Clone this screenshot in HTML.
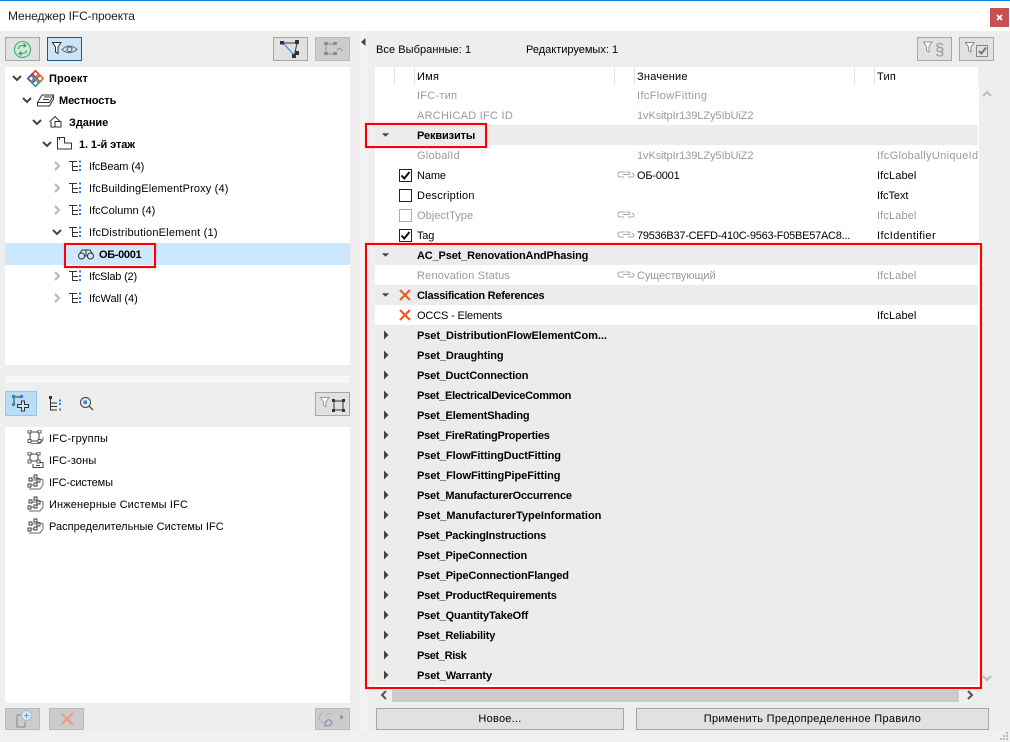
<!DOCTYPE html>
<html lang="ru">
<head>
<meta charset="utf-8">
<title>Менеджер IFC-проекта</title>
<style>
html,body{margin:0;padding:0}
body{width:1010px;height:742px;position:relative;overflow:hidden;background:#f0f0f0;font-family:"Liberation Sans","Noto Sans CJK SC",sans-serif;font-size:11px;color:#000}
div,span,svg{position:absolute;display:block}
svg{overflow:visible}
.t{white-space:nowrap;line-height:20px;height:20px;letter-spacing:.25px;margin-top:1px}
.b{font-weight:bold;letter-spacing:-.15px}
.g{color:#9a9a9a}
.row{left:375px;width:603px;height:20px;background:#fff}
.grp{background:#ececec}
.btn{box-sizing:border-box;border:1px solid #a6a6a6;background:#e1e1e1}
.dis{background:#ccc;border-color:#bababa}
.red{box-sizing:border-box;border:2px solid #f00;box-shadow:0 0 1px #f88}
.sep{top:67px;width:1px;height:18px;background:#e3e3e3}
</style>
</head>
<body>
<svg width="0" height="0" style="left:0;top:0">
<defs>
<symbol id="type" viewBox="0 0 14 14"><path d="M1 2.500H9M4.500 2.500V11.500H10M4.500 7.500H10" fill="none" stroke="#333" stroke-width="1"/><path d="M11 1.500H13V3.500H11ZM11 6H13V8H11ZM11 10H13V12H11Z" fill="#2f80ed"/></symbol>
<symbol id="open" viewBox="0 0 10 10"><path d="M1 3L5 7L9 3" fill="none" stroke="#444" stroke-width="2"/></symbol>
<symbol id="closed" viewBox="0 0 10 10"><path d="M3 1L7 5L3 9" fill="none" stroke="#b4b4b4" stroke-width="2"/></symbol>
<symbol id="down" viewBox="0 0 10 6"><path d="M1 1H9L5 5Z" fill="#444"/></symbol>
<symbol id="right" viewBox="0 0 6 10"><path d="M1 .5L5.500 5L1 9.500Z" fill="#444"/></symbol>
<symbol id="link" viewBox="0 0 18 10"><path d="M8 2H3Q1 2 1 4.500Q1 7 3 7H7M6 4.500H12Q13 4.500 13 3Q13 2 12 2H9M11 7H15Q17 7 17 5Q17 3.500 15 3.500" fill="none" stroke="#aaa" stroke-width="1"/></symbol>
<symbol id="cross" viewBox="0 0 12 12"><path d="M1 1L11 11M11 1L1 11" stroke="#ef5a24" stroke-width="2.200" fill="none"/></symbol>
<symbol id="chk" viewBox="0 0 13 13"><rect x=".5" y=".5" width="12" height="12" fill="#fff" stroke="#222"/><path d="M2.500 6.500L5.300 9.500L10.500 3" fill="none" stroke="#111" stroke-width="2"/></symbol>
<symbol id="grp" viewBox="0 0 18 16"><path d="M3 2H12V11H3Z" fill="none" stroke="#444"/><path d="M4 13.500H13L16 10V7M13 13.500V10H16" fill="none" stroke="#777"/><path d="M1 0H4V3H1ZM11 0H14V3H11ZM1 9.500H4V12.500H1ZM11 9.500H14V12.500H11Z" fill="#fff" stroke="#333" stroke-width=".8"/></symbol>
<symbol id="zone" viewBox="0 0 18 16"><path d="M3 2H11V9H3ZM6 12V15.500H16V10.500H13V8" fill="none" stroke="#444"/><path d="M9 13.500H13" stroke="#444"/><path d="M1 0H4V3H1ZM10 0H13V3H10ZM1 8H4V11H1ZM10 8H13V11H10Z" fill="#fff" stroke="#333" stroke-width=".8"/></symbol>
<symbol id="sys" viewBox="0 0 18 16"><path d="M7 1H10V4H7ZM2 4H5V7H2ZM10 5H13V8H10ZM1 10H4V13H1ZM7 9H10V12H7Z" fill="#fff" stroke="#333" stroke-width=".9"/><path d="M5 6L10 6M4 11H7M2 15H13L16 11V6L11 4" fill="none" stroke="#666"/></symbol>
</defs>
</svg>

<!-- frame -->
<div style="left:0;top:0;width:1010px;height:31px;background:#fff"></div>
<div style="left:0;top:0;width:1010px;height:1px;background:#0a84d8"></div>
<div class="t" style="left:8px;top:6px;margin-top:0;font-size:12px;letter-spacing:-.1px;color:#222">Менеджер IFC-проекта</div>
<div style="left:990px;top:8px;width:19px;height:19px;background:#c75050"></div>
<svg style="left:996px;top:14px" width="7" height="7" viewBox="0 0 7 7"><path d="M1 1L6 6M6 1L1 6" stroke="#fff" stroke-width="1.800"/></svg>

<div style="left:0;top:31px;width:1010px;height:700px;background:#eee"></div>
<div style="left:360px;top:31px;width:7px;height:700px;background:#f3f3f3"></div>
<svg style="left:361px;top:38px" width="5" height="8" viewBox="0 0 5 8"><path d="M4.500 0V8L0 4Z" fill="#444"/></svg>

<!-- left toolbar -->
<div class="btn" style="left:5px;top:37px;width:35px;height:24px"></div>
<svg style="left:14px;top:41px" width="17" height="17" viewBox="0 0 17 17"><circle cx="8.500" cy="8.500" r="8" fill="none" stroke="#2db567" stroke-width="1.100"/><path d="M4.500 8Q4.800 4.500 8.500 4.500H11M9.500 2.500L12 4.500L9.500 6.500M12.500 9Q12.200 12.500 8.500 12.500H6M7.500 10.500L5 12.500L7.500 14.500" fill="none" stroke="#2db567" stroke-width="1.200"/></svg>
<div class="btn" style="left:47px;top:37px;width:35px;height:24px;background:#cce4f7;border-color:#0d5a9a"></div>
<svg style="left:52px;top:42px" width="26" height="14" viewBox="0 0 26 14"><path d="M.5 .5H9L6 5V11.500L3.500 10V5Z" fill="#fff" stroke="#333"/><path d="M10 7.500Q17 .5 25 7.500Q17 14 10 7.500Z" fill="none" stroke="#666"/><circle cx="17.500" cy="7.300" r="2.400" fill="none" stroke="#666" stroke-width="1.200"/></svg>
<div class="btn" style="left:273px;top:37px;width:35px;height:24px"></div>
<svg style="left:280px;top:40px" width="20" height="18" viewBox="0 0 20 18"><path d="M3 3H17L14.500 15" fill="none" stroke="#333"/><path d="M3 3L14 15" stroke="#2f7fe0"/><path d="M0 1H4V4.500H0ZM15 0H19V4H15ZM15 11H19V15H15ZM12 14H16V18H12Z" fill="#333"/></svg>
<div class="btn dis" style="left:315px;top:37px;width:35px;height:24px"></div>
<svg style="left:324px;top:42px" width="19" height="14" viewBox="0 0 19 14"><path d="M2 2H11M2 2V12H11" fill="none" stroke="#999"/><path d="M0 0H4V3H0ZM9 0H13V3H9ZM0 10H4V13H0ZM9 10H13V13H9Z" fill="#8d8d8d"/><path d="M13 9Q14 5 17 7L18 9" fill="none" stroke="#999"/></svg>

<!-- tree -->
<div style="left:5px;top:67px;width:345px;height:298px;background:#fff"></div>
<div style="left:5px;top:243px;width:345px;height:22px;background:#cce8ff"></div>
<svg style="left:12px;top:73px" width="10" height="10"><use href="#open"/></svg>
<svg style="left:27px;top:70px" width="17" height="17" viewBox="0 0 17 17"><path d="M8.500 .8L13 5.300L8.500 9.800L4 5.300Z" fill="none" stroke="#d8402f" stroke-width="1.700"/><path d="M5.300 4L9.800 8.500L5.300 13L.8 8.500Z" fill="none" stroke="#7b3fa8" stroke-width="1.700"/><path d="M11.700 4L16.200 8.500L11.700 13L7.200 8.500Z" fill="none" stroke="#e0703a" stroke-width="1.700"/><path d="M8.500 7.200L13 11.700L8.500 16.200L4 11.700Z" fill="none" stroke="#2aa198" stroke-width="1.700"/></svg>
<div class="t b" style="left:49px;top:68px;letter-spacing:.1px">Проект</div>
<svg style="left:22px;top:95px" width="10" height="10"><use href="#open"/></svg>
<svg style="left:37px;top:94px" width="17" height="13" viewBox="0 0 17 13"><path d="M.5 8.500L5 1H16.500L12.500 8.500H.5V12H12.500L16.500 5V1M7 3H14M6 5.500H12" fill="none" stroke="#333"/></svg>
<div class="t b" style="left:59px;top:90px;letter-spacing:-.1px">Местность</div>
<svg style="left:32px;top:117px" width="10" height="10"><use href="#open"/></svg>
<svg style="left:49px;top:116px" width="13" height="12" viewBox="0 0 13 12"><path d="M.5 6L6 .5L11 5.500M2 6V11H12V5.500H6V11" fill="none" stroke="#333"/></svg>
<div class="t b" style="left:69px;top:112px;letter-spacing:-.05px">Здание</div>
<svg style="left:42px;top:139px" width="10" height="10"><use href="#open"/></svg>
<svg style="left:57px;top:137px" width="15" height="13" viewBox="0 0 15 13"><path d="M.5 .5H7.500V6H14.500V12H.5Z M2.500 .5V3" fill="none" stroke="#333"/></svg>
<div class="t b" style="left:79px;top:134px;letter-spacing:-.1px">1. 1-й этаж</div>

<svg style="left:52px;top:161px" width="10" height="10"><use href="#closed"/></svg>
<svg style="left:68px;top:159px" width="14" height="14"><use href="#type"/></svg>
<div class="t" style="left:89px;top:156px;letter-spacing:-.15px">IfcBeam (4)</div>
<svg style="left:52px;top:183px" width="10" height="10"><use href="#closed"/></svg>
<svg style="left:68px;top:181px" width="14" height="14"><use href="#type"/></svg>
<div class="t" style="left:89px;top:178px;letter-spacing:.14px">IfcBuildingElementProxy (4)</div>
<svg style="left:52px;top:205px" width="10" height="10"><use href="#closed"/></svg>
<svg style="left:68px;top:203px" width="14" height="14"><use href="#type"/></svg>
<div class="t" style="left:89px;top:200px;letter-spacing:.02px">IfcColumn (4)</div>
<svg style="left:52px;top:227px" width="10" height="10"><use href="#open"/></svg>
<svg style="left:68px;top:225px" width="14" height="14"><use href="#type"/></svg>
<div class="t" style="left:89px;top:222px;letter-spacing:.2px">IfcDistributionElement (1)</div>
<svg style="left:78px;top:248px" width="16" height="12" viewBox="0 0 16 12"><circle cx="3.500" cy="8" r="3" fill="none" stroke="#333"/><circle cx="12.500" cy="8" r="3" fill="none" stroke="#333"/><path d="M4 2H12L14.500 6M1.500 6L4 2M6.500 8H9.500M8 2V8" fill="none" stroke="#333"/></svg>
<div class="t b" style="left:99px;top:244px;letter-spacing:-.33px">ОБ-0001</div>
<svg style="left:52px;top:271px" width="10" height="10"><use href="#closed"/></svg>
<svg style="left:68px;top:269px" width="14" height="14"><use href="#type"/></svg>
<div class="t" style="left:89px;top:266px;letter-spacing:-.2px">IfcSlab (2)</div>
<svg style="left:52px;top:293px" width="10" height="10"><use href="#closed"/></svg>
<svg style="left:68px;top:291px" width="14" height="14"><use href="#type"/></svg>
<div class="t" style="left:89px;top:288px;letter-spacing:-.03px">IfcWall (4)</div>
<div class="red" style="left:64px;top:243px;width:92px;height:25px"></div>

<div style="left:5px;top:376px;width:345px;height:7px;background:#f7f7f7"></div>

<!-- lower toolbar -->
<div style="left:5px;top:391px;width:32px;height:25px;box-sizing:border-box;background:#bbdcf5;border:1px solid #90c8f0"></div>
<svg style="left:12px;top:395px" width="18" height="17" viewBox="0 0 18 17"><path d="M2 2H10M2 2V10" stroke="#333" fill="none"/><path d="M0 0H3V3H0ZM8 0H11V3H8ZM0 8H3V11H0Z" fill="#2f7fe0"/><path d="M9.500 6H12.500V9.500H16.500V12.500H12.500V16H9.500V12.500H5.500V9.500H9.500Z" fill="#cfe6f8" stroke="#333"/></svg>
<svg style="left:48px;top:396px" width="14" height="15" viewBox="0 0 14 15"><path d="M1 0H4V3H1Z" fill="#333"/><path d="M2.500 3V14H9M2.500 7H9M2.500 10.500H9" stroke="#333" fill="none"/><path d="M11 3.500H13V5.500H11ZM11 7H13V9H11ZM11 12.500H13V14.500H11Z" fill="#2f80ed"/></svg>
<svg style="left:79px;top:396px" width="15" height="15" viewBox="0 0 15 15"><circle cx="6.500" cy="6.500" r="5" fill="none" stroke="#555" stroke-width="1.200"/><rect x="4.500" y="4.500" width="3.500" height="3.500" fill="#2f80ed"/><path d="M10 10L14 14" stroke="#555" stroke-width="1.400"/></svg>
<div class="btn" style="left:315px;top:392px;width:35px;height:24px"></div>
<svg style="left:320px;top:397px" width="26" height="15" viewBox="0 0 26 15"><path d="M.5 .5H9L6 5V10L3.500 8.500V5Z" fill="#fff" stroke="#999"/><path d="M14 4H23V13H14Z" fill="none" stroke="#333"/><path d="M12 2H15V5H12ZM22 2H25V5H22ZM12 12H15V15H12ZM22 12H25V15H22Z" fill="#333"/></svg>

<!-- lower list -->
<div style="left:5px;top:427px;width:345px;height:276px;background:#fff"></div>
<svg style="left:27px;top:430px" width="18" height="16"><use href="#grp"/></svg>
<div class="t" style="left:49px;top:428px">IFC-группы</div>
<svg style="left:27px;top:452px" width="18" height="16"><use href="#zone"/></svg>
<div class="t" style="left:49px;top:450px;letter-spacing:.12px">IFC-зоны</div>
<svg style="left:27px;top:474px" width="18" height="16"><use href="#sys"/></svg>
<div class="t" style="left:49px;top:472px;letter-spacing:-.1px">IFC-системы</div>
<svg style="left:27px;top:496px" width="18" height="16"><use href="#sys"/></svg>
<div class="t" style="left:49px;top:494px;letter-spacing:.15px">Инженерные Системы IFC</div>
<svg style="left:27px;top:518px" width="18" height="16"><use href="#sys"/></svg>
<div class="t" style="left:49px;top:516px;letter-spacing:.02px">Распределительные Системы IFC</div>

<!-- lower buttons -->
<div class="btn dis" style="left:5px;top:708px;width:35px;height:22px"></div>
<svg style="left:16px;top:710px" width="16" height="18" viewBox="0 0 16 18"><path d="M6 5H1V17H9V12" fill="none" stroke="#888"/><circle cx="10.500" cy="5.500" r="5" fill="#dbe8f8" stroke="#9dbbe8"/><path d="M10.500 3V8M8 5.500H13" stroke="#6f9be0"/></svg>
<div class="btn dis" style="left:49px;top:708px;width:35px;height:22px"></div>
<svg style="left:60px;top:712px" width="14" height="14" viewBox="0 0 14 14"><path d="M1 1L13 13M13 1L1 13" stroke="#ef9a85" stroke-width="2"/></svg>
<div class="btn dis" style="left:315px;top:708px;width:35px;height:22px"></div>
<svg style="left:317px;top:711px" width="28" height="17" viewBox="0 0 28 17"><path d="M6 2A5 5 0 1 0 10 11" fill="none" stroke="#9dbbe8" stroke-width="1.500"/><path d="M9 5Q11 1 16 3" fill="none" stroke="#bbb"/><path d="M8 12Q11 6 15 11Q15 15 8 15Z" fill="none" stroke="#888"/><path d="M25 3L25 9L28 6Z" fill="#888" transform="translate(-1.500 0)"/></svg>

<!-- right top -->
<div class="t" style="left:376px;top:39px;letter-spacing:.06px">Все Выбранные: 1</div>
<div class="t" style="left:526px;top:39px;letter-spacing:0">Редактируемых: 1</div>
<div class="btn" style="left:917px;top:37px;width:35px;height:24px"></div>
<svg style="left:923px;top:41px" width="24" height="17" viewBox="0 0 24 17"><path d="M.5 1H9L6 5.500V11L3.500 9.500V5.500Z" fill="#fff" stroke="#999"/><text x="12" y="14" font-family="Liberation Sans, sans-serif" font-size="17" fill="#999">§</text></svg>
<div class="btn" style="left:959px;top:37px;width:35px;height:24px"></div>
<svg style="left:965px;top:42px" width="24" height="15" viewBox="0 0 24 15"><path d="M.5 .5H9L6 5V10L3.500 8.500V5Z" fill="#fff" stroke="#888"/><rect x="11.500" y="3.500" width="11" height="11" fill="none" stroke="#888"/><path d="M14 9L16.500 11.500L21 5.500" stroke="#777" stroke-width="2" fill="none"/></svg>

<!-- table -->
<div style="left:375px;top:67px;width:603px;height:18px;background:#fff"></div>
<div style="left:375px;top:85px;width:604px;height:602px;background:#fff"></div>
<div class="sep" style="left:394px"></div><div class="sep" style="left:414px"></div><div class="sep" style="left:614px"></div><div class="sep" style="left:634px"></div><div class="sep" style="left:854px"></div><div class="sep" style="left:874px"></div>
<div class="t" style="left:417px;top:66px">Имя</div>
<div class="t" style="left:637px;top:66px">Значение</div>
<div class="t" style="left:877px;top:66px">Тип</div>

<div class="t g" style="left:417px;top:85px">IFC-тип</div><div class="t g" style="left:637px;top:85px;letter-spacing:.4px">IfcFlowFitting</div>
<div class="t g" style="left:417px;top:105px">ARCHICAD IFC ID</div><div class="t g" style="left:637px;top:105px;letter-spacing:-.07px">1vKsitpIr139LZy5IbUiZ2</div>
<div class="row grp" style="top:125px"></div>
<svg style="left:381px;top:132px" width="9" height="6"><use href="#down"/></svg>
<div class="t b" style="left:417px;top:125px;letter-spacing:-.12px">Реквизиты</div>
<div class="t g" style="left:417px;top:145px">GlobalId</div><div class="t g" style="left:637px;top:145px;letter-spacing:-.07px">1vKsitpIr139LZy5IbUiZ2</div><div class="t g" style="left:877px;top:145px;letter-spacing:.32px">IfcGloballyUniqueId</div>

<svg style="left:399px;top:169px" width="13" height="13"><use href="#chk"/></svg>
<div class="t" style="left:417px;top:165px;letter-spacing:-.1px">Name</div>
<svg style="left:617px;top:170px" width="18" height="10"><use href="#link"/></svg>
<div class="t" style="left:637px;top:165px;letter-spacing:-.2px">ОБ-0001</div><div class="t" style="left:877px;top:165px;letter-spacing:.12px">IfcLabel</div>

<svg style="left:399px;top:189px" width="13" height="13" viewBox="0 0 13 13"><rect x=".5" y=".5" width="12" height="12" fill="#fff" stroke="#222"/></svg>
<div class="t" style="left:417px;top:185px">Description</div><div class="t" style="left:877px;top:185px;letter-spacing:-.05px">IfcText</div>

<svg style="left:399px;top:209px" width="13" height="13" viewBox="0 0 13 13"><rect x=".5" y=".5" width="12" height="12" fill="#fff" stroke="#aaa"/></svg>
<div class="t g" style="left:417px;top:205px;letter-spacing:.05px">ObjectType</div>
<svg style="left:617px;top:210px" width="18" height="10"><use href="#link"/></svg>
<div class="t g" style="left:877px;top:205px;letter-spacing:.12px">IfcLabel</div>

<svg style="left:399px;top:229px" width="13" height="13"><use href="#chk"/></svg>
<div class="t" style="left:417px;top:225px;letter-spacing:-.2px">Tag</div>
<svg style="left:617px;top:230px" width="18" height="10"><use href="#link"/></svg>
<div class="t" style="left:637px;top:225px;letter-spacing:-.24px">79536B37-CEFD-410C-9563-F05BE57AC8...</div><div class="t" style="left:877px;top:225px;letter-spacing:.4px">IfcIdentifier</div>

<div class="row grp" style="top:245px"></div>
<svg style="left:381px;top:252px" width="9" height="6"><use href="#down"/></svg>
<div class="t b" style="left:417px;top:245px;letter-spacing:-.15px">AC_Pset_RenovationAndPhasing</div>
<div class="t g" style="left:417px;top:265px;letter-spacing:.19px">Renovation Status</div>
<svg style="left:617px;top:270px" width="18" height="10"><use href="#link"/></svg>
<div class="t g" style="left:637px;top:265px;letter-spacing:-.1px">Существующий</div><div class="t g" style="left:877px;top:265px;letter-spacing:.12px">IfcLabel</div>
<div class="row grp" style="top:285px"></div>
<svg style="left:381px;top:292px" width="9" height="6"><use href="#down"/></svg>
<svg style="left:399px;top:289px" width="12" height="12"><use href="#cross"/></svg>
<div class="t b" style="left:417px;top:285px;letter-spacing:-.26px">Classification References</div>
<svg style="left:399px;top:309px" width="12" height="12"><use href="#cross"/></svg>
<div class="t" style="left:417px;top:305px;letter-spacing:-.15px">OCCS - Elements</div><div class="t" style="left:877px;top:305px;letter-spacing:.12px">IfcLabel</div>

<div class="row grp" style="top:325px;height:360px"></div>
<svg style="left:383px;top:330px" width="6" height="10"><use href="#right"/></svg><div class="t b" style="left:417px;top:325px;letter-spacing:-.08px">Pset_DistributionFlowElementCom...</div>
<svg style="left:383px;top:350px" width="6" height="10"><use href="#right"/></svg><div class="t b" style="left:417px;top:345px;letter-spacing:-.1px">Pset_Draughting</div>
<svg style="left:383px;top:370px" width="6" height="10"><use href="#right"/></svg><div class="t b" style="left:417px;top:365px;letter-spacing:-.16px">Pset_DuctConnection</div>
<svg style="left:383px;top:390px" width="6" height="10"><use href="#right"/></svg><div class="t b" style="left:417px;top:385px;letter-spacing:-.27px">Pset_ElectricalDeviceCommon</div>
<svg style="left:383px;top:410px" width="6" height="10"><use href="#right"/></svg><div class="t b" style="left:417px;top:405px;letter-spacing:-.16px">Pset_ElementShading</div>
<svg style="left:383px;top:430px" width="6" height="10"><use href="#right"/></svg><div class="t b" style="left:417px;top:425px;letter-spacing:-.22px">Pset_FireRatingProperties</div>
<svg style="left:383px;top:450px" width="6" height="10"><use href="#right"/></svg><div class="t b" style="left:417px;top:445px;letter-spacing:-.08px">Pset_FlowFittingDuctFitting</div>
<svg style="left:383px;top:470px" width="6" height="10"><use href="#right"/></svg><div class="t b" style="left:417px;top:465px;letter-spacing:-.05px">Pset_FlowFittingPipeFitting</div>
<svg style="left:383px;top:490px" width="6" height="10"><use href="#right"/></svg><div class="t b" style="left:417px;top:485px;letter-spacing:-.2px">Pset_ManufacturerOccurrence</div>
<svg style="left:383px;top:510px" width="6" height="10"><use href="#right"/></svg><div class="t b" style="left:417px;top:505px;letter-spacing:0">Pset_ManufacturerTypeInformation</div>
<svg style="left:383px;top:530px" width="6" height="10"><use href="#right"/></svg><div class="t b" style="left:417px;top:525px;letter-spacing:-.23px">Pset_PackingInstructions</div>
<svg style="left:383px;top:550px" width="6" height="10"><use href="#right"/></svg><div class="t b" style="left:417px;top:545px;letter-spacing:-.16px">Pset_PipeConnection</div>
<svg style="left:383px;top:570px" width="6" height="10"><use href="#right"/></svg><div class="t b" style="left:417px;top:565px;letter-spacing:-.13px">Pset_PipeConnectionFlanged</div>
<svg style="left:383px;top:590px" width="6" height="10"><use href="#right"/></svg><div class="t b" style="left:417px;top:585px;letter-spacing:-.19px">Pset_ProductRequirements</div>
<svg style="left:383px;top:610px" width="6" height="10"><use href="#right"/></svg><div class="t b" style="left:417px;top:605px;letter-spacing:-.15px">Pset_QuantityTakeOff</div>
<svg style="left:383px;top:630px" width="6" height="10"><use href="#right"/></svg><div class="t b" style="left:417px;top:625px;letter-spacing:-.2px">Pset_Reliability</div>
<svg style="left:383px;top:650px" width="6" height="10"><use href="#right"/></svg><div class="t b" style="left:417px;top:645px;letter-spacing:-.35px">Pset_Risk</div>
<svg style="left:383px;top:670px" width="6" height="10"><use href="#right"/></svg><div class="t b" style="left:417px;top:665px;letter-spacing:-.13px">Pset_Warranty</div>

<!-- scrollbars -->
<svg style="left:982px;top:90px" width="10" height="7" viewBox="0 0 10 7"><path d="M1 6L5 2L9 6" fill="none" stroke="#bbb" stroke-width="2"/></svg>
<svg style="left:982px;top:675px" width="10" height="7" viewBox="0 0 10 7"><path d="M1 1L5 5L9 1" fill="none" stroke="#bbb" stroke-width="2"/></svg>
<div style="left:392px;top:690px;width:567px;height:12px;background:#ccc"></div>
<svg style="left:380px;top:690px" width="7" height="10" viewBox="0 0 7 10"><path d="M6 1L2 5L6 9" fill="none" stroke="#555" stroke-width="2"/></svg>
<svg style="left:967px;top:690px" width="7" height="10" viewBox="0 0 7 10"><path d="M1 1L5 5L1 9" fill="none" stroke="#555" stroke-width="2"/></svg>

<!-- annotation boxes -->
<div class="red" style="left:365px;top:123px;width:122px;height:25px"></div>
<div class="red" style="left:365px;top:243px;width:617px;height:446px"></div>

<!-- bottom buttons -->
<div class="btn" style="left:376px;top:708px;width:248px;height:22px;text-align:center"><span class="t" style="position:static;line-height:18px;height:18px">Новое...</span></div>
<div class="btn" style="left:636px;top:708px;width:353px;height:22px;text-align:center"><span class="t" style="position:static;line-height:18px;height:18px;letter-spacing:.3px">Применить Предопределенное Правило</span></div>

<svg style="left:1000px;top:732px" width="9" height="9" viewBox="0 0 9 9"><path d="M6 0H8V2H6ZM3 3H5V5H3ZM6 3H8V5H6ZM0 6H2V8H0ZM3 6H5V8H3ZM6 6H8V8H6Z" fill="#bbb"/></svg>
</body>
</html>
